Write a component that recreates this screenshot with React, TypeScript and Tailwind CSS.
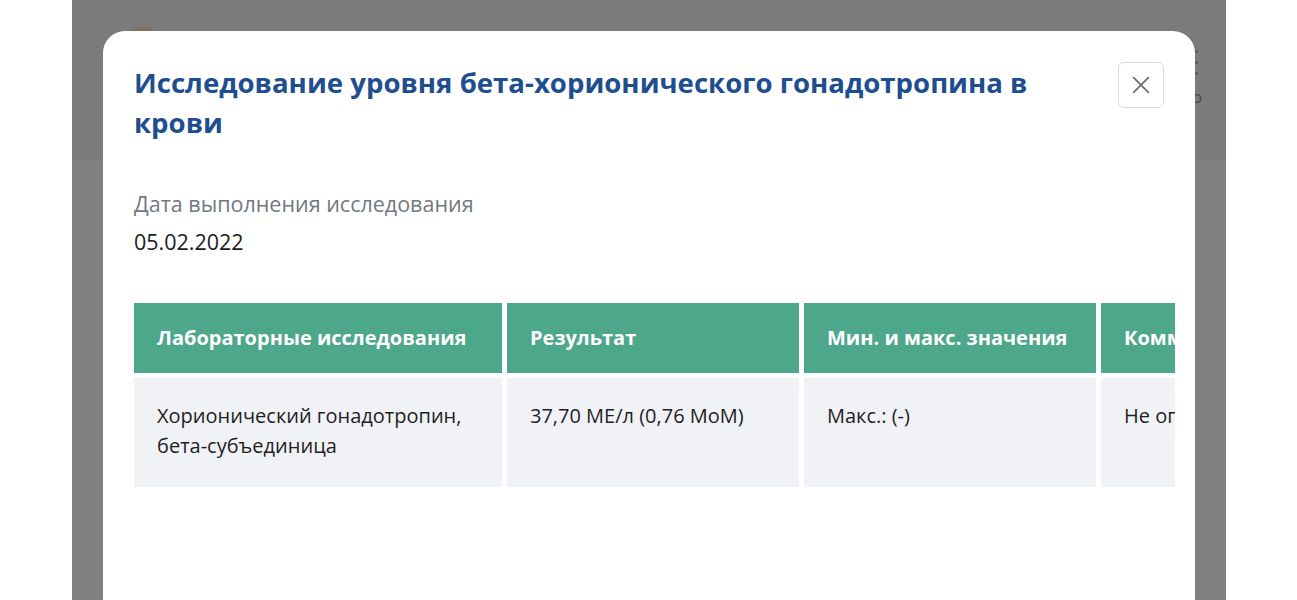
import React from 'react';

const headers = ['Лабораторные исследования', 'Результат', 'Мин. и макс. значения', 'Комментарий'];
const row = ['Хорионический гонадотропин, бета-субъединица', '37,70 МЕ/л (0,76 МоМ)', 'Макс.: (-)', 'Не определено'];

export default function App() {
  return (
    <div className="flex h-[600px] w-full overflow-hidden bg-white" style={{ fontFamily: '"Open Sans", sans-serif' }}>
      <div className="w-[72px] shrink-0 bg-white" />

      {/* page behind the overlay */}
      <div className="relative flex-1 overflow-hidden bg-[#818181]">
        <div className="h-[160px] bg-[#7b7b7b]" />
        <div className="absolute left-[50px] top-[27px] h-[40px] w-[40px] rounded-full bg-[#7f6e66]" />
        <div className="absolute left-[1123px] top-[50px] flex flex-col gap-[8px]">
          <span className="h-[3px] w-[3px] rounded-full bg-[#5a5a5a]" />
          <span className="h-[3px] w-[3px] rounded-full bg-[#5a5a5a]" />
          <span className="h-[3px] w-[3px] rounded-full bg-[#5a5a5a]" />
        </div>
        <span className="absolute left-[1120px] top-[84px] text-[17px] text-[#4a4a4a]">о</span>

        {/* modal */}
        <div className="absolute left-[31px] top-[31px] h-[620px] w-[1092px] rounded-t-[22px] bg-white px-[31px] pt-[31px]">
          <div className="flex items-start justify-between gap-6">
            <h2 className="text-[27.6px] font-bold leading-[40px] text-[#1e4e8f]">
              Исследование уровня бета-хорионического гонадотропина в крови
            </h2>
            <button className="flex h-[46px] w-[46px] shrink-0 items-center justify-center rounded-md border border-[#dcdcdc] text-[#6b6f76]">
              <svg width="22" height="22" viewBox="0 0 24 24" fill="none" stroke="currentColor" strokeWidth="2" strokeLinecap="round">
                <path d="M4 4l16 16M20 4L4 20" />
              </svg>
            </button>
          </div>

          <div className="mt-[43px] text-[21.5px] leading-[38px]">
            <div className="text-[#727880]">Дата выполнения исследования</div>
            <div className="text-[#1c1c1c]">05.02.2022</div>
          </div>

          <div className="mt-[42px] w-[1041px] overflow-hidden">
            <div className="grid w-max grid-cols-[368px_292px_292px_292px] gap-[5px]">
              {headers.map((h) => (
                <div key={h} className="flex h-[70px] items-center whitespace-nowrap bg-[#4da78a] px-[23px] text-[20px] font-bold text-white">
                  {h}
                </div>
              ))}
              {row.map((c) => (
                <div key={c} className="h-[109px] bg-[#f0f2f5] px-[23px] pt-[23px] text-[20px] leading-[30px] text-[#1f1f1f]">
                  {c}
                </div>
              ))}
            </div>
          </div>
        </div>
      </div>

      <div className="w-[71px] shrink-0 bg-white" />
    </div>
  );
}
